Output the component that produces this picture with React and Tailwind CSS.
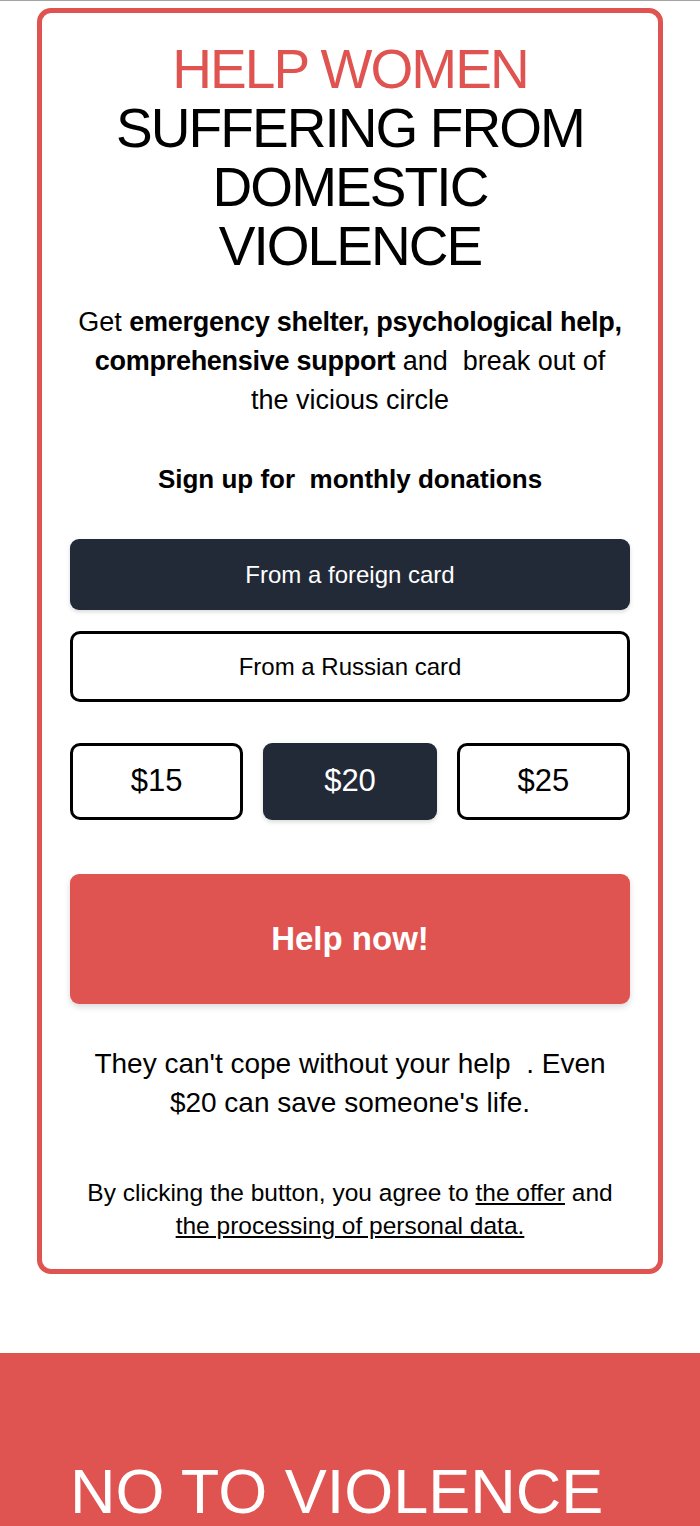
import React, { useState } from 'react';

const amounts = [15, 20, 25];

export default function App() {
  const [card, setCard] = useState('foreign');
  const [amount, setAmount] = useState(20);

  return (
    <div className="bg-white border-t border-[#a3a3a3] font-['Liberation_Sans',Arial,sans-serif] text-black">
      {/* Donation card */}
      <div className="mx-[37px] mt-[7px] rounded-[14px] border-[5px] border-[#df5450] px-[28px] pt-[27px] pb-[27px] text-center">
        <h1 className="text-[55px] leading-[59px] tracking-[-0.035em] uppercase">
          <span className="text-[#df5450]">Help women</span>
          <br />
          Suffering from
          <br />
          domestic
          <br />
          violence
        </h1>

        <p className="mt-[27px] text-[27px] leading-[39px]">
          Get <b className="tracking-[-0.01em]">emergency shelter, psychological help,</b>
          <br />
          <b className="tracking-[-0.01em]">comprehensive support</b> and&nbsp; break out of
          <br />
          the vicious circle
        </p>

        <p className="mt-[40px] text-[26px] leading-[39px] font-bold">Sign up for&nbsp; monthly donations</p>

        {/* Card type */}
        <div className="mt-[40px] flex flex-col gap-[21px]">
          <button
            onClick={() => setCard('foreign')}
            className={
              card === 'foreign'
                ? 'h-[71px] w-full rounded-[9px] bg-[#222a38] text-white text-[24px] shadow-[0_2px_4px_rgba(0,0,0,0.15)]'
                : 'h-[71px] w-full rounded-[10px] border-[3px] border-black bg-white text-[24px]'
            }
          >
            From a foreign card
          </button>
          <button
            onClick={() => setCard('russian')}
            className={
              card === 'russian'
                ? 'h-[71px] w-full rounded-[9px] bg-[#222a38] text-white text-[24px] shadow-[0_2px_4px_rgba(0,0,0,0.15)]'
                : 'h-[71px] w-full rounded-[10px] border-[3px] border-black bg-white text-[24px]'
            }
          >
            From a Russian card
          </button>
        </div>

        {/* Amounts */}
        <div className="mt-[41px] grid grid-cols-3 gap-[20px]">
          {amounts.map((a) =>
            a === amount ? (
              <button
                key={a}
                onClick={() => setAmount(a)}
                className="h-[77px] rounded-[9px] bg-[#222a38] text-white text-[31px] shadow-[0_2px_4px_rgba(0,0,0,0.15)]"
              >
                ${a}
              </button>
            ) : (
              <button
                key={a}
                onClick={() => setAmount(a)}
                className="h-[77px] rounded-[10px] border-[3px] border-black bg-white text-[31px]"
              >
                ${a}
              </button>
            )
          )}
        </div>

        <button className="mt-[54px] h-[130px] w-full rounded-[9px] bg-[#df5450] text-white text-[33px] font-bold shadow-[0_3px_6px_rgba(0,0,0,0.15)]">
          Help now!
        </button>

        <p className="mt-[40px] text-[28px] leading-[39px]">
          They can't cope without your help&nbsp; . Even
          <br />
          $20 can save someone's life.
        </p>

        <p className="mt-[54px] text-[24.5px] leading-[33px]">
          By clicking the button, you agree to <a href="#" className="underline">the offer</a> and
          <br />
          <a href="#" className="underline">the processing of personal data.</a>
        </p>
      </div>

      {/* Bottom banner */}
      <div className="mt-[79px] bg-[#df5450] pl-[70px] pt-[107px] pb-[4px]">
        <h2 className="text-[63px] leading-[62px] text-white uppercase">No to violence</h2>
      </div>
    </div>
  );
}
